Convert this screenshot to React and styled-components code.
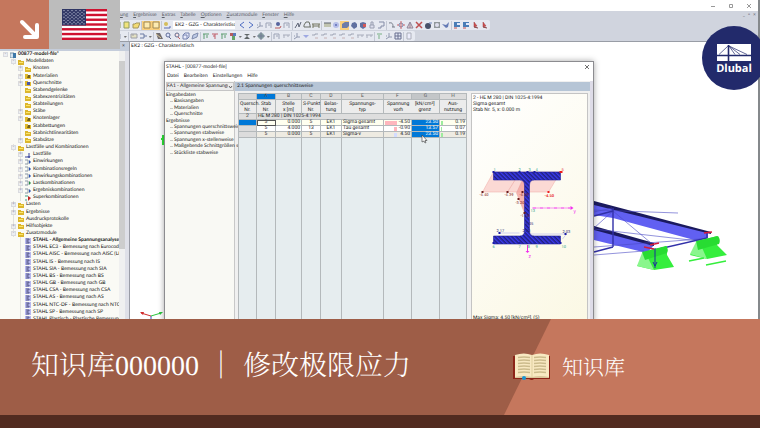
import React, { useState } from 'react';
import styled, { createGlobalStyle, css } from 'styled-components';

const menus = ['ung', 'Ergebnisse', 'Extras', 'Tabelle', 'Optionen', 'Zusatzmodule', 'Fenster', 'Hilfe'];

// glyph names per toolbar group, see GLYPHS
const viewTools = [
  ['back', 'next', 'axis', 'frame', 'node', 'frame'],
  ['truss', 'car', 'bench'],
  ['paper', 'globe', 'cube*', 'solid', 'redcube', 'lock', 'magnet'],
  ['curve', 'target', 'cone', 'cross', 'sphere', 'disc', 'bird'],
  ['blue', 'blue', 'flag', 'flag'],
];

const editTools = [
  ['ruler', 'load', 'caret'],
  ['grab', 'zoom', 'zoomr', 'box', 'solidg'],
  ['member', 'memberr', 'member', 'color', 'caret', 'dark', 'caret', 'target2', 'caret'],
  ['frame', 'bench2'],
  ['axis', 'support', 'step', 'step', 'step', 'step', 'step', 'bench2', 'bench2'],
  ['green', 'axis', 'grid'],
  ['page'],
];

const modelTree = [
  { depth: 0, text: '00877-model-file*', icon: 'root', open: '-', bold: true },
  { depth: 1, text: 'Modelldaten', icon: 'folder', open: '-' },
  { depth: 2, text: 'Knoten', icon: 'folder', open: '+' },
  { depth: 2, text: 'Materialien', icon: 'mat', open: '+' },
  { depth: 2, text: 'Querschnitte', icon: 'cs', open: '+' },
  { depth: 2, text: 'Stabendgelenke', icon: 'folder' },
  { depth: 2, text: 'Stabexzentrizitäten', icon: 'folder' },
  { depth: 2, text: 'Stabteilungen', icon: 'folder' },
  { depth: 2, text: 'Stäbe', icon: 'folder', open: '+' },
  { depth: 2, text: 'Knotenlager', icon: 'mat', open: '+' },
  { depth: 2, text: 'Stabbettungen', icon: 'mat' },
  { depth: 2, text: 'Stabnichtlinearitäten', icon: 'folder' },
  { depth: 2, text: 'Stabsätze', icon: 'folder', open: '+' },
  { depth: 1, text: 'Lastfälle und Kombinationen', icon: 'folder', open: '-' },
  { depth: 2, text: 'Lastfälle', icon: 'case', open: '+' },
  { depth: 2, text: 'Einwirkungen', icon: 'combo', open: '+' },
  { depth: 2, text: 'Kombinationsregeln', icon: 'combo', open: '+' },
  { depth: 2, text: 'Einwirkungskombinationen', icon: 'combo', open: '+' },
  { depth: 2, text: 'Lastkombinationen', icon: 'combog', open: '+' },
  { depth: 2, text: 'Ergebniskombinationen', icon: 'combo', open: '+' },
  { depth: 2, text: 'Superkombinationen', icon: 'combor' },
  { depth: 1, text: 'Lasten', icon: 'folder', open: '+' },
  { depth: 1, text: 'Ergebnisse', icon: 'folder', open: '+' },
  { depth: 1, text: 'Ausdruckprotokolle', icon: 'folder' },
  { depth: 1, text: 'Hilfsobjekte', icon: 'folder', open: '+' },
  { depth: 1, text: 'Zusatzmodule', icon: 'folder', open: '-' },
  { depth: 2, text: 'STAHL - Allgemeine Spannungsanalyse', icon: 'module', bold: true },
  { depth: 2, text: 'STAHL EC3 - Bemessung nach Eurocode', icon: 'module' },
  { depth: 2, text: 'STAHL AISC - Bemessung nach AISC (LRF', icon: 'module' },
  { depth: 2, text: 'STAHL IS - Bemessung nach IS', icon: 'module' },
  { depth: 2, text: 'STAHL SIA - Bemessung nach SIA', icon: 'module' },
  { depth: 2, text: 'STAHL BS - Bemessung nach BS', icon: 'module' },
  { depth: 2, text: 'STAHL GB - Bemessung nach GB', icon: 'module' },
  { depth: 2, text: 'STAHL CSA - Bemessung nach CSA', icon: 'module' },
  { depth: 2, text: 'STAHL AS - Bemessung nach AS', icon: 'module' },
  { depth: 2, text: 'STAHL NTC-DF - Bemessung nach NTC-D', icon: 'module' },
  { depth: 2, text: 'STAHL SP - Bemessung nach SP', icon: 'module' },
  { depth: 2, text: 'STAHL Plastisch - Plastische Bemessung', icon: 'module' },
];

const dialogTree = [
  { text: 'Eingabedaten' },
  { text: 'Basisangaben', child: true },
  { text: 'Materialien', child: true },
  { text: 'Querschnitte', child: true },
  { text: 'Ergebnisse' },
  { text: 'Spannungen querschnittsweise', child: true },
  { text: 'Spannungen stabweise', child: true },
  { text: 'Spannungen x-stellenweise', child: true },
  { text: 'Maßgebende Schnittgrößen sta', child: true },
  { text: 'Stückliste stabweise', child: true },
];

const columnWidths = [18, 19, 26, 19, 21, 42, 28, 28, 27];

const results = [
  { stab: 5, x: '0.000', punkt: 5, ek: 'EK1', typ: 'Sigma gesamt', vorh: '-4.50', grenz: '23.50', aus: '0.19', bar: 12, tone: '#ffb6bd' },
  { stab: 5, x: '4.000', punkt: 13, ek: 'EK1', typ: 'Tau gesamt', vorh: '-0.90', grenz: '13.57', aus: '0.07', bar: 3, tone: '#ffb6bd' },
  { stab: 5, x: '0.000', punkt: 5, ek: 'EK1', typ: 'Sigma-v', vorh: '4.50', grenz: '23.50', aus: '0.19', bar: 3, tone: '#d3dcff' },
];

const GLYPHS = {
  back: <path d="M6 1 2 4l4 3" fill="none" stroke="#2b50b8" />,
  next: <path d="M2 1l4 3-4 3" fill="none" stroke="#2b50b8" />,
  caret: <path d="M3 4h3L4 6z" fill="#555" />,
  axis: <path d="M4 1v4h3M4 5 1 7M1 4h1" fill="none" stroke="#7d86a0" />,
  frame: <path d="M1 7V2h5M6 2v5M3 4h2" fill="none" stroke="#8b93a8" />,
  node: <><circle cx="4" cy="3" r="2" fill="#33448a" /><path d="M1 7h5l1-2" fill="none" stroke="#b03b3b" /></>,
  truss: <path d="M1 7 4 2l1 4 2-5" fill="none" stroke="#3d4458" />,
  car: <path d="M1 6V4l2-3h3l1 3v2M1 6h7" fill="none" stroke="#4d5346" />,
  bench: <path d="M0 3h8M1 3v4M7 3v4M1 5h6" fill="none" stroke="#585a3e" />,
  bench2: <path d="M1 3h7M2 3v3M6 3v2" fill="none" stroke="#9a9fb0" />,
  paper: <><path d="M1 2h7v4H1z" fill="#b8bba0" /><path d="M1 2h7" stroke="#3f4452" /></>,
  globe: <><circle cx="4" cy="4" r="3" fill="#aab4e6" /><circle cx="4" cy="4" r="1" fill="#3d4fa8" /></>,
  cube: <path d="M1 3l3-2h4v4L6 7H1z" fill="#4b68b4" />,
  solid: <path d="M2 2l3-1 2 2v3L4 8 1 5z" fill="#3f538c" />,
  redcube: <><path d="M1 2l3-1 3 1v4L4 8 1 6z" fill="#41538e" /><path d="M4 3h3v3H4z" fill="#cf3535" /></>,
  lock: <path d="M2 7V4h4v3zM3 4V1h2v3" fill="#dde" stroke="#888fa3" />,
  magnet: <path d="M2 1h5v4H4v2H1" fill="none" stroke="#6d7796" />,
  curve: <path d="M1 2c4-1 4 2 4 4M4 6h3" fill="none" stroke="#59616e" />,
  target: <><circle cx="4" cy="4" r="2" fill="none" stroke="#5e6f9e" /><path d="M4 0v8M0 4h2M6 4h2" stroke="#c64b4b" /></>,
  target2: <><circle cx="4" cy="4" r="3" fill="#6d8c8c" /><path d="M4 0v8M0 4h8" stroke="#56607e" /></>,
  cone: <path d="M1 7l3-6 3 6zM4 2v5" fill="#e8c9c9" stroke="#7b6f86" />,
  cross: <path d="M1 1l6 6M7 1 1 7" stroke="#b52a2a" strokeWidth="1.5" />,
  sphere: <><circle cx="4" cy="5" r="3" fill="#222c48" /><path d="M5 2h3" stroke="#5673b4" /></>,
  disc: <><path d="M1 1h6v6H1z" fill="#7d8488" /><circle cx="4" cy="4" r="2" fill="#dde" /></>,
  bird: <path d="M0 3l4 1 3-3-1 5-2 1z" fill="#4560a8" />,
  blue: <><path d="M1 1h6v5H1z" fill="#2463a9" /><path d="M4 2h3v2H4z" fill="#dfe9ff" /><path d="M1 7h3" stroke="#bf2a2a" /></>,
  flag: <><path d="M3 1v5l3-1z" fill="#c92525" stroke="#8c1616" strokeWidth=".5" /><path d="M3 6l4 1" stroke="#6c1616" /></>,
  ruler: <path d="M1 2h6v4H1zM3 2v2" fill="#e4e0b8" stroke="#8b8c95" />,
  load: <path d="M1 2h4v4H1M5 4h3" fill="none" stroke="#4d6190" />,
  grab: <><path d="M1 1h4l3 6H3z" fill="#544e4e" /><path d="M1 2l5 4" stroke="#d9c18a" /></>,
  zoom: <><circle cx="4" cy="3" r="2" fill="#dce4ff" stroke="#3e4d80" /><path d="M5 5l2 2" stroke="#3e4d80" /></>,
  zoomr: <><circle cx="4" cy="3" r="2" fill="#ffe3e3" stroke="#444f77" /><path d="M5 5l2 2" stroke="#bf3d3d" /></>,
  box: <path d="M1 3l2-2h4v4L5 7H1zM1 3h4v4" fill="#e9ecff" stroke="#5b6aa0" />,
  solidg: <path d="M1 7l1-4 5-2-1 4z" fill="#b5c3e3" stroke="#66759d" />,
  member: <path d="M1 2h6M2 2v5M5 3v3" fill="none" stroke="#3a8a50" />,
  memberr: <path d="M1 2h6M4 2v5M2 4h2" fill="none" stroke="#b73c4b" />,
  color: <><path d="M1 1h3v3H1z" fill="#a83b3b" /><path d="M4 1h3v3H4z" fill="#3660ae" /><path d="M3 4h3v4H3z" fill="#469445" /></>,
  dark: <path d="M1 2h6L4 4l3 3H1l3-3z" fill="#3e4545" />,
  support: <path d="M1 3h6L4 6z" fill="#8d9ae0" />,
  step: <><path d="M1 3h3V2h3" fill="none" stroke="#9096a8" /><path d="M4 6h3" stroke="#c2a6a6" /></>,
  green: <path d="M3 7V3M1 2h5" stroke="#5fa56a" />,
  grid: <path d="M1 1h6v6H1zM4 1v6M1 4h6" fill="#e4e8f8" stroke="#4b5378" />,
  page: <path d="M2 1h4v6H2z" fill="#eef" stroke="#9ea3ae" />,
  new: <path d="M1 1h5v6H1z" fill="#f3e45f" stroke="#7e8a44" />,
  open: <path d="M1 3h2l1-1h4L6 7H1z" fill="#f7d957" stroke="#92813b" />,
  save: <path d="M1 1h6v6H1z" fill="#fff3bd" stroke="#8b7a4c" />,
  user: <><circle cx="3" cy="3" r="2" fill="#d1b437" /><path d="M1 7h6V5" fill="none" stroke="#3a4fa1" /></>,
};

const TREE_ICONS = {
  root: <><path d="M0 1h4v5H0z" fill="#d4e3ee" stroke="#7893a8" /><path d="M3 1h3v5H3z" fill="#3e78a8" /></>,
  folder: <><path d="M0 1h3v1h3v4H0z" fill="#dcb62c" /><path d="M1 3h4v1H1z" fill="#fae56c" /></>,
  mat: <><path d="M0 1h3v1h3v4H0z" fill="#e0b92c" /><path d="M3 2h2v3H2z" fill="#73611e" /></>,
  cs: <><path d="M0 1h3v1h3v4H0z" fill="#e0b92c" /><path d="M2 2h3v3H2z" fill="#4a55a8" /></>,
  case: <path d="M0 5h3M4 1v4M3 4l1 2 1-2" fill="none" stroke="#34419c" />,
  combo: <><path d="M0 1h3v4H0" fill="none" stroke="#8b98a6" /><path d="M4 1l2 2-2 2z" fill="#2a52b4" /></>,
  combog: <><path d="M0 1h3v4H0" fill="none" stroke="#8b98a6" /><path d="M4 1l2 2-2 2z" fill="#258b44" /></>,
  combor: <><path d="M0 1h3M0 5h2" fill="none" stroke="#3c9b86" /><path d="M3 1l3 2-3 3z" fill="#bf2525" /></>,
  module: <><path d="M0 0h6v6H0z" fill="#b6b7ef" /><path d="M1 1h3v1H2v2h2v1H1" fill="none" stroke="#5c5f8c" /></>,
};

const Flag = () => (
  <svg width="45" height="31" viewBox="0 0 45 31" role="img" aria-label="USA">
    <rect width="45" height="31" fill="#fff" />
    {[...Array(7)].map((_, i) => (
      <rect key={i} y={i * 4.77} width="45" height="2.4" fill="#cf1230" />
    ))}
    <rect width="24" height="16.5" fill="#303765" />
    {[...Array(9)].map((_, row) =>
      [...Array(row % 2 ? 5 : 6)].map((__, col) => (
        <circle
          key={`${row}-${col}`}
          cx={2 + col * 4 + (row % 2 ? 2 : 0)}
          cy={1.6 + row * 1.65}
          r=".6"
          fill="#d5d8ea"
        />
      ))
    )}
  </svg>
);

const Arrow = () => (
  <svg width="22" height="22" viewBox="0 0 22 22" aria-hidden="true">
    <path d="M3 3l14 14M18 6v12H6" fill="none" stroke="#fff" strokeWidth="4" strokeLinecap="round" strokeLinejoin="round" />
  </svg>
);

const Bridge = () => (
  <svg width="34" height="17" viewBox="0 0 34 17" aria-hidden="true">
    <rect width="34" height="17" fill="#fff" />
    <path d="M0 11.5h34" stroke="#222a6b" strokeWidth="1.6" />
    <path d="M11.5 1v16" stroke="#222a6b" strokeWidth="1.6" />
    <path d="M11 2 2 10.5M12 2l6 8.5M12 2l11 8.5M12 2l18 8.5" stroke="#222a6b" strokeWidth=".7" />
  </svg>
);

const Book = () => (
  <svg width="38" height="28" viewBox="0 0 38 28" aria-hidden="true">
    <path d="M0 3h37v23H21q-2 2-5 0H0z" fill="#8c2418" />
    <path d="M2 2q9-3 17 0 8-3 17 0v22H2z" fill="#f8e9c2" />
    <path d="M2 24q9-2 17 0 8-2 17 0v1H2z" fill="#d9c59a" />
    <path d="M19 2v22" stroke="#dfcf9f" />
    {[4, 7, 10, 13, 16, 19].map((y) => (
      <path key={y} d={`M5 ${y + 0.5}q6-1 12 0M21 ${y + 0.5}q6-1 12 0`} fill="none" stroke="#cbbb8c" strokeWidth="1.3" />
    ))}
    <circle cx="11" cy="25" r="2" fill="#1796d4" />
  </svg>
);

// end of the steel frame with its two supports
const Scene = () => (
  <SceneSvg viewBox="130 42 628 277" preserveAspectRatio="xMaxYMin slice" aria-hidden="true">
    <path d="M594 202 708 232v6l-10 3-85-23-19-3z" fill="#6160f2" />
    <path d="M594 201 711 232v2L594 205z" fill="#1b1a5e" />
    <path d="M594 228l60 17-6 7-5 0-49-12z" fill="#6160f2" />
    <path d="M594 226l60 17v3L594 230z" fill="#1b1a5e" />
    <path d="M594 210l84 3M594 212l18-4M594 228l19-17 38 32M594 229l105 12M594 247l106-8M594 255l50-4" fill="none" stroke="#4a49c4" strokeWidth=".6" />
    <path d="M594 216l19-5M613 208v39M594 252l19-5M650 251l57-13v-6" fill="none" stroke="#3130a8" strokeWidth="1.4" />
    <path d="M647 252l20-6v9l7 12-20 3-17-4z" fill="#35ee3d" />
    <path d="M642 253l-5 13 17 4-8-16z" fill="#8af68d" />
    <path d="M642 252l24-6q3 3 1 7l-22 7z" fill="#28dc32" />
    <path d="M699 241l18-5v9l10 10-20 4-17-4z" fill="#35ee3d" />
    <path d="M696 242l-6 12 17 5-7-16z" fill="#8af68d" />
    <path d="M696 241l22-5q3 4 1 8l-21 6z" fill="#28dc32" />
    <path d="M689 261l15-3M706 265l20-4" stroke="#35ee3d" strokeWidth="1.5" />
    <path d="M650 245l9-2M644 247l10 2M704 233l8-1" stroke="#d51a3b" strokeWidth="1.5" />
    <path d="M655 248v20M653 262l2 4 2-4" fill="none" stroke="#1d2f9c" />
    <path d="M161 139h4M163 135v10" stroke="#2ee436" strokeWidth="2" />
    <path d="M151 316v4" stroke="#384cc0" />
    <path d="M151 316l-10-3" stroke="#d12c2c" />
    <path d="M140 312l4 0-1 3zM138 312l-1 2" fill="#d12c2c" />
    <path d="M151 316l10-3" stroke="#2bc53e" />
    <path d="M163 312l-4 0 1 3z" fill="#2bc53e" />
  </SceneSvg>
);

// HE M 280 with the stress diagram on the upper flange
const Section = () => (
  <SectionSvg viewBox="472 113 115 202" preserveAspectRatio="xMidYMin slice" aria-hidden="true">
    <defs>
      <pattern id="hatch" width="3" height="3" patternUnits="userSpaceOnUse" patternTransform="rotate(45)">
        <rect width="3" height="3" fill="#3a39ee" />
        <rect width="3" height="1.5" fill="#20207c" />
      </pattern>
    </defs>
    <path d="M493 172l-11 20h66l12-20z" fill="#fbd9d4" stroke="#eeaaa5" strokeWidth=".5" />
    <path d="M519 173l-12 19M525 173l-9 20 8 20z" fill="#f5a5a0" stroke="#e28f8c" strokeWidth=".5" opacity=".8" />
    <path d="M493 172h67v8h-26q-5 0-5 5v46q0 5 5 5h26v8h-67v-8h26q5 0 5-5v-46q0-5-5-5h-26z" fill="url(#hatch)" stroke="#1f1e9c" strokeWidth=".6" />
    <path d="M498 233h21M530 234h36l-4 5" fill="none" stroke="#a5a5ee" strokeWidth=".5" />
    <path d="M532 208h38" stroke="#f22bee" strokeDasharray="4 1 1 1" />
    <path d="M527 245v6" stroke="#f22bee" />
    <path d="M570 206l3 2-3 2zM525 251h4l-2 2z" fill="#f22bee" />
    {[[482, 192], [507, 192], [522, 192], [518, 199], [524, 213]].map(([x, y]) => (
      <rect key={`${x}${y}`} x={x - 1} y={y - 1} width="2" height="2" fill="#6c1b1b" />
    ))}
    {[[493, 172], [519, 172], [527, 172], [534, 172], [493, 243], [519, 243], [534, 243], [560, 243], [499, 233], [565, 234]].map(([x, y]) => (
      <rect key={`${x}${y}`} x={x - 1} y={y - 1} width="2" height="2" fill="#1d1da6" />
    ))}
    <path d="M559 171h3v2h-3zM547 191h2v2h-2z" fill="#ee1d1d" />
    <g fontSize="4" fill="#2c9c86">
      <text x="493" y="171">1</text>
      <text x="518" y="171">2</text>
      <text x="528" y="171">3</text>
      <text x="535" y="171">4</text>
      <text x="561" y="171" fill="#e02525">5</text>
      <text x="530" y="212">13</text>
      <text x="492" y="248">6</text>
      <text x="518" y="248">7</text>
      <text x="527" y="248">8</text>
      <text x="535" y="248">9</text>
      <text x="561" y="248">10</text>
    </g>
    <g fontSize="4" fill="#7c2020">
      <text x="479" y="196">-4.40</text>
      <text x="504" y="196">-4.39</text>
      <text x="519" y="196">-4.39</text>
      <text x="515" y="204">-3.20</text>
      <text x="520" y="217">-1.10</text>
      <text x="544" y="197" fill="#e81c1c" fontWeight="bold">-4.50</text>
    </g>
    <g fontSize="4" fill="#26266f">
      <text x="496" y="232">2.17</text>
      <text x="522" y="232">2.20</text>
      <text x="525" y="225">1.05</text>
      <text x="562" y="233">2.03</text>
    </g>
    <g fontSize="5" fill="#f22bee">
      <text x="573" y="213">y</text>
      <text x="528" y="258">z</text>
    </g>
  </SectionSvg>
);

const ToolGroup = ({ tools }) => (
  <Group>
    {tools.map((tool, index) => {
      const name = tool.replace('*', '');
      return (
        <Tool key={index} type="button" aria-label={name} $active={tool !== name} $narrow={name === 'caret'}>
          <svg width="8" height="8" viewBox="0 0 8 8">{GLYPHS[name]}</svg>
        </Tool>
      );
    })}
  </Group>
);

const ResultTable = () => (
  <Table>
    <colgroup>
      {columnWidths.map((width, index) => (
        <col key={index} style={{ width }} />
      ))}
    </colgroup>
    <thead>
      <LetterRow>
        <th />
        {'ABCDEFGH'.split('').map((letter) => (
          <Letter key={letter} $current={letter === 'A'} $marked={letter === 'G'}>{letter}</Letter>
        ))}
      </LetterRow>
      <TitleRow>
        <th>Quersch.<br />Nr.</th>
        <th>Stab<br />Nr.</th>
        <th>Stelle<br />x [m]</th>
        <th>S-Punkt<br />Nr.</th>
        <th>Belas-<br />tung</th>
        <th>Spannungs-<br />typ</th>
        <th colSpan="2">
          <Pair><span>Spannung</span><span>[kN/cm²]</span><span>vorh</span><span>grenz</span></Pair>
        </th>
        <th>Aus-<br />nutzung</th>
      </TitleRow>
    </thead>
    <tbody>
      <GroupRow>
        <td>2</td>
        <td colSpan="8">HE M 280 | DIN 1025-4:1994</td>
      </GroupRow>
      {results.map((row, index) => (
        <ResultRow key={index} $tone={['#fffff0', '#ffffff', '#eeebe2'][index]}>
          <Cell $head $selected={index === 0} />
          <Cell $center $focused={index === 0}>{row.stab}</Cell>
          <Cell>{row.x}</Cell>
          <Cell $center>{row.punkt}</Cell>
          <Cell $center>{row.ek}</Cell>
          <Cell $left>{row.typ}</Cell>
          <Cell>
            <Value>
              <BarTrack><Bar style={{ width: row.bar, background: row.tone }} /></BarTrack>
              {row.vorh}
            </Value>
          </Cell>
          <Cell $selected>{row.grenz}</Cell>
          <Cell>
            <Value>
              <Bar style={{ width: Math.max(1, Math.round(row.aus * 10)), background: '#9dec9d' }} />
              {row.aus}
            </Value>
          </Cell>
        </ResultRow>
      ))}
      <FillRow>
        {columnWidths.map((_, index) => (
          <td key={index} />
        ))}
      </FillRow>
    </tbody>
  </Table>
);

export default function App() {
  const [loadCase, setLoadCase] = useState('EK2');
  const [designCase, setDesignCase] = useState('FA1');

  return (
    <Page>
      <GlobalStyle />
      <Stage>
        <Program>
          <TitleBar>
            <WindowButton type="button" aria-label="Minimieren"><svg width="6" height="6"><path d="M1 3.5h4" stroke="#999" /></svg></WindowButton>
            <WindowButton type="button" aria-label="Maximieren"><svg width="6" height="6"><path d="M1.5 1.5h3v3h-3z" fill="none" stroke="#999" /></svg></WindowButton>
            <WindowButton type="button" aria-label="Schließen"><svg width="6" height="6"><path d="M1 1l4 4M5 1 1 5" stroke="#999" /></svg></WindowButton>
          </TitleBar>
          <Ribbon>
            <MenuBar>
              {menus.map((menu) => (
                <MenuButton key={menu} type="button">{menu}</MenuButton>
              ))}
              <MdiButtons>
                <button type="button">_</button>
                <button type="button">▫</button>
                <button type="button">×</button>
              </MdiButtons>
            </MenuBar>
            <Toolbar>
              <ToolGroup tools={['new', 'new', 'open']} />
              <ToolGroup tools={['save*', 'save*']} />
              <ToolGroup tools={['user']} />
              <CaseSelect aria-label="Lastfall" value={loadCase} onChange={(e) => setLoadCase(e.target.value)}>
                <option value="EK2">EK2 - GZG - Charakteristisc</option>
              </CaseSelect>
              {viewTools.map((tools, index) => (
                <ToolGroup key={index} tools={tools} />
              ))}
            </Toolbar>
            <Toolbar>
              <ToolGroup tools={['frame', 'caret']} />
              {editTools.map((tools, index) => (
                <ToolGroup key={index} tools={tools} />
              ))}
            </Toolbar>
          </Ribbon>
          <Workspace>
            <Navigator>
              <NavHeader><button type="button" aria-label="Navigator schließen">×</button></NavHeader>
              <NavBody>
                <Tree>
                  {modelTree.map((item) => (
                    <TreeRow key={item.text} $depth={item.depth} $bold={item.bold}>
                      <Expander $shown={item.open}>{item.open}</Expander>
                      <TreeIcon viewBox="0 0 6 6">{TREE_ICONS[item.icon]}</TreeIcon>
                      <span>{item.text}</span>
                    </TreeRow>
                  ))}
                </Tree>
                <ScrollTrack><ScrollThumb /></ScrollTrack>
              </NavBody>
            </Navigator>
            <Viewport>
              <Caption>EK2 : GZG - Charakteristisch</Caption>
              <Scene />
            </Viewport>
          </Workspace>
        </Program>

        <Dialog role="dialog" aria-label="STAHL">
          <DialogTitle>
            <span>STAHL - [00877-model-file]</span>
            <WindowButton type="button" aria-label="Dialog schließen"><svg width="6" height="6"><path d="M1 1l4 4M5 1 1 5" stroke="#333" strokeWidth=".7" /></svg></WindowButton>
          </DialogTitle>
          <DialogMenu>
            {['Datei', 'Bearbeiten', 'Einstellungen', 'Hilfe'].map((menu) => (
              <button key={menu} type="button">{menu}</button>
            ))}
          </DialogMenu>
          <DialogBody>
            <DialogNav>
              <SelectBox>
                <select aria-label="Bemessungsfall" value={designCase} onChange={(e) => setDesignCase(e.target.value)}>
                  <option value="FA1">FA1 - Allgemeine Spannungsana</option>
                </select>
                <svg width="5" height="4"><path d="M1 1l1.5 2L4 1" fill="none" stroke="#444" strokeWidth=".8" /></svg>
              </SelectBox>
              <DialogTree>
                {dialogTree.map((item) => (
                  <DialogItem key={item.text} $child={item.child}>{item.text}</DialogItem>
                ))}
              </DialogTree>
            </DialogNav>
            <DialogMain>
              <MaskTitle>2.1 Spannungen querschnittsweise</MaskTitle>
              <Panels>
                <ResultTable />
                <Preview>
                  <p>2 - HE M 280 | DIN 1025-4:1994</p>
                  <p>Sigma gesamt</p>
                  <p>Stab Nr. 5, x: 0.000 m</p>
                  <Section />
                  <p>Max Sigma: 4.50 [kN/cm²], (5)</p>
                </Preview>
              </Panels>
            </DialogMain>
          </DialogBody>
          <Cursor viewBox="0 0 7 9" aria-hidden="true">
            <path d="M1 0v7l2-1 1 2 1-.5-1-2h2z" fill="#fff" stroke="#333" strokeWidth=".6" />
          </Cursor>
        </Dialog>

        <Badges>
          <ArrowBadge><Arrow /></ArrowBadge>
          <FlagBadge><Flag /></FlagBadge>
        </Badges>
        <Logo>
          <Bridge />
          <span>Dlubal</span>
        </Logo>
      </Stage>

      <Banner>
        <Headline>
          <span>知识库000000</span>
          <span>｜</span>
          <span>修改极限应力</span>
        </Headline>
        <Category>
          <Book />
          <span>知识库</span>
        </Category>
      </Banner>
      <Strip />
    </Page>
  );
}

const GlobalStyle = createGlobalStyle`
  * {
    box-sizing: border-box;
  }

  body {
    margin: 0;
    font-family: Lato, 'Open Sans', sans-serif;
    text-rendering: geometricPrecision;
  }

  button, select {
    margin: 0;
    padding: 0;
    border: 0;
    background: none;
    color: inherit;
    font: inherit;
    text-rendering: inherit;
  }

  p, h1, ul {
    margin: 0;
    padding: 0;
    list-style: none;
  }

  svg {
    display: block;
    flex: none;
  }
`;

const Page = styled.div`
  display: flex;
  flex-direction: column;
  height: 100vh;
  overflow: hidden;
`;

const Stage = styled.main`
  position: relative;
  flex: 1;
  min-height: 0;
  overflow: hidden;
  font-size: 5px;
  line-height: 7px;
  color: #222;
`;

const Program = styled.div`
  display: flex;
  flex-direction: column;
  height: 100%;
  border-right: 2px solid #85898c;
  background: #fff;
`;

const TitleBar = styled.header`
  display: flex;
  justify-content: flex-end;
  align-items: center;
  gap: 12px;
  height: 11px;
  padding-right: 6px;
`;

const WindowButton = styled.button`
  display: flex;
`;

const Ribbon = styled.div`
  height: 31px;
  border-bottom: 1px solid #999da6;
  background: #d0d4de;
`;

const MenuBar = styled.nav`
  display: flex;
  align-items: center;
  gap: 5px;
  height: 9px;
  padding-left: 120px;
  color: #5c6068;
`;

const MenuButton = styled.button`
  &::first-letter {
    text-decoration: underline;
  }
`;

const MdiButtons = styled.div`
  display: flex;
  gap: 3px;
  margin-left: auto;
  padding-right: 2px;
`;

const Toolbar = styled.div`
  display: flex;
  align-items: center;
  gap: 2px;
  width: max-content;
  height: 10px;
  padding: 0 2px 0 113px;
  border-radius: 0 2px 2px 0;
  background: #e6e9f1;

  & + & {
    margin-top: 1px;
  }
`;

const Group = styled.div`
  display: flex;

  & + & {
    border-left: 1px solid #c3c8d4;
    margin-left: -1px;
  }
`;

const Tool = styled.button`
  display: flex;
  justify-content: center;
  align-items: center;
  width: ${({ $narrow }) => ($narrow ? 5 : 9)}px;
  height: 9px;
  background: ${({ $active }) => ($active ? '#f9cf7c' : 'none')};

  svg {
    opacity: 0.8;
  }
`;

const CaseSelect = styled.select`
  appearance: none;
  width: 62px;
  height: 8px;
  padding-left: 2px;
  background: #fff;
  line-height: 8px;
`;

const Workspace = styled.div`
  display: flex;
  flex: 1;
  min-height: 0;
`;

const Navigator = styled.aside`
  display: flex;
  flex: none;
  flex-direction: column;
  width: 130px;
  border-right: 1px solid #9a9ca6;
  background: #dfe0e8;
`;

const NavHeader = styled.div`
  display: flex;
  justify-content: flex-end;
  height: 9px;
  padding-right: 4px;
  background: #c5cddb;
  line-height: 7px;
`;

const NavBody = styled.div`
  display: flex;
  flex: 1;
  min-height: 0;
  margin-right: 4px;
  overflow: hidden;
  background: #fafaf5;
`;

const Tree = styled.ul`
  display: grid;
  flex: 1;
  grid-auto-rows: minmax(0, 1fr);
  min-width: 0;
  margin-bottom: -4px;
  overflow: hidden;
`;

const guides = ['none', 'linear-gradient(#e2e2de, #e2e2de) 13px 0 / 1px 100% no-repeat', 'linear-gradient(#e2e2de, #e2e2de) 20px 0 / 1px 100% no-repeat'];

const TreeRow = styled.li`
  display: flex;
  align-items: center;
  gap: 2px;
  padding-left: ${({ $depth }) => [3, 11, 18][$depth]}px;
  background: ${({ $depth }) => guides[$depth]};
  font-weight: ${({ $bold }) => ($bold ? 700 : 400)};
  white-space: nowrap;
  color: #111;
`;

const Expander = styled.span`
  display: flex;
  flex: none;
  justify-content: center;
  align-items: center;
  width: 5px;
  height: 5px;
  line-height: 5px;
  font-weight: 400;
  color: #889;

  ${({ $shown }) =>
    $shown &&
    css`
      border: 1px solid #dadbdf;
      background: #eceef2;
    `}
`;

const TreeIcon = styled.svg`
  width: 6px;
  height: 6px;
`;

const ScrollTrack = styled.div`
  flex: none;
  width: 6px;
  padding-top: 10px;
  background: #f0f0f0;
`;

const ScrollThumb = styled.div`
  height: 73%;
  background: #cdcdcd;
`;

const Viewport = styled.section`
  display: flex;
  flex: 1;
  flex-direction: column;
  min-width: 0;
  overflow: hidden;
`;

const Caption = styled.div`
  height: 8px;
  margin-bottom: -8px;
  padding: 1px 1px 0;
`;

const SceneSvg = styled.svg`
  flex: 1;
  width: 100%;
  min-height: 0;
`;

const Dialog = styled.section`
  position: absolute;
  top: 61px;
  left: 164px;
  display: flex;
  flex-direction: column;
  width: 430px;
  height: calc(100% - 57px);
  border: 1px solid #8c8c90;
  background: #fff;
  box-shadow: 0 0 6px rgba(0, 0, 0, 0.35);
`;

const DialogTitle = styled.div`
  display: flex;
  justify-content: space-between;
  align-items: center;
  height: 10px;
  padding: 0 3px 0 1px;
`;

const DialogMenu = styled.nav`
  display: flex;
  align-items: center;
  gap: 5px;
  height: 9px;
  padding-left: 2px;
`;

const DialogBody = styled.div`
  display: flex;
  flex: 1;
  min-height: 0;
  border-right: 3px solid #dedce8;
  background: #f0f0f0;
`;

const DialogNav = styled.div`
  flex: none;
  width: 70px;
  padding: 1px 0 0 1px;
  border-right: 1px solid #c8c8c8;
  background: #f9f9f4;
`;

const SelectBox = styled.div`
  display: flex;
  align-items: center;
  height: 9px;
  border: 1px solid #c5c5c5;
  background: #ececec;

  select {
    flex: 1;
    min-width: 0;
    height: 7px;
    appearance: none;
  }
`;

const DialogTree = styled.ul`
  display: grid;
  grid-auto-rows: 1fr;
  height: 64px;
  margin-top: 1px;
`;

const DialogItem = styled.li`
  height: 6px;
  padding-left: ${({ $child }) => ($child ? 8 : 0)}px;
  white-space: nowrap;
  line-height: 6px;
  background: ${({ $child }) => ($child ? 'linear-gradient(#c8c8c4, #c8c8c4) 4px 3px / 3px 1px no-repeat' : 'none')};
`;

const DialogMain = styled.div`
  display: flex;
  flex: 1;
  flex-direction: column;
  min-width: 0;
`;

const MaskTitle = styled.h1`
  height: 9px;
  margin-top: 1px;
  padding-left: 2px;
  background: #b6c5d6;
  font-size: 5px;
  font-weight: 400;
  line-height: 8px;
`;

const Panels = styled.div`
  display: flex;
  flex: 1;
  gap: 4px;
  min-height: 0;
  padding: 2px 2px 0 3px;
`;

const Table = styled.table`
  flex: none;
  width: 228px;
  height: 100%;
  border-collapse: collapse;
  table-layout: fixed;
  background: #e6edef;
  font-family: Roboto, 'Liberation Sans', sans-serif;
  line-height: 5px;

  th, td {
    padding: 0 1px;
    border: 1px solid #b4b9bb;
    font-weight: 400;
    white-space: nowrap;
  }
`;

const LetterRow = styled.tr`
  height: 6px;
  background: #d8d8d8;
`;

const Letter = styled.th`
  background: ${({ $current, $marked }) => ($current ? '#0078d7' : $marked ? '#c3c6c8' : '#dcdcdc')};
  color: #555;
`;

const TitleRow = styled.tr`
  height: 14px;
  background: #ececec;
  line-height: 6px;
`;

const Pair = styled.div`
  display: grid;
  grid-template-columns: 1fr 1fr;
`;

const GroupRow = styled.tr`
  height: 6px;
  background: #dedede;

  td:first-child {
    text-align: center;
  }
`;

const ResultRow = styled.tr`
  height: 6px;
  background: ${({ $tone }) => $tone};
`;

const Cell = styled.td`
  text-align: ${({ $center, $left }) => ($center ? 'center' : $left ? 'left' : 'right')};

  ${({ $head }) =>
    $head &&
    css`
      background: #dcdcdc;
    `}

  ${({ $selected }) =>
    $selected &&
    css`
      background: #0078d7;
      color: #fff;
    `}

  ${({ $focused }) =>
    $focused &&
    css`
      outline: 1px solid #555;
      outline-offset: -1px;
    `}
`;

const Value = styled.div`
  display: flex;
  justify-content: space-between;
  align-items: center;
`;

const BarTrack = styled.div`
  display: flex;
  justify-content: flex-end;
  width: 12px;
`;

const Bar = styled.div`
  height: 4px;
`;

const FillRow = styled.tr`
  td {
    border-top: 0;
  }
`;

const Preview = styled.div`
  display: flex;
  flex: 1;
  flex-direction: column;
  min-width: 0;
  padding: 1px 0 0 1px;
  border: 1px solid #c4c4c4;
  background: linear-gradient(135deg, #fff, #fbf8e4);
  font-family: Roboto, 'Liberation Sans', sans-serif;
  line-height: 6px;
`;

const SectionSvg = styled.svg`
  flex: 1;
  width: 100%;
  min-height: 0;
`;

const Cursor = styled.svg`
  position: absolute;
  top: 73px;
  left: 256px;
  width: 7px;
  height: 9px;
`;

const Badges = styled.div`
  position: absolute;
  top: 0;
  left: 0;
  display: flex;
  height: 49px;
`;

const ArrowBadge = styled.div`
  display: flex;
  justify-content: flex-end;
  align-items: flex-end;
  width: 49px;
  padding: 8px;
  background: #c5775d;
`;

const FlagBadge = styled.div`
  display: flex;
  justify-content: center;
  align-items: center;
  width: 71px;
  background: #bcbcbc;
`;

const Logo = styled.div`
  position: absolute;
  top: 26px;
  right: -6px;
  display: flex;
  flex-direction: column;
  justify-content: center;
  align-items: center;
  width: 64px;
  height: 64px;
  padding-top: 4px;
  border-radius: 50%;
  background: #222a6b;
  color: #fff;
  font-family: 'Open Sans', 'Noto Sans', sans-serif;
  font-size: 11px;
  font-weight: 700;
  line-height: 15px;
`;

const Banner = styled.footer`
  display: grid;
  flex: none;
  grid-template-columns: 63fr 32fr;
  align-items: center;
  height: 96px;
  background: #9e5d47;
  color: #fff;
  font-family: 'Liberation Serif', 'Noto Serif CJK SC', 'Noto Sans CJK SC', serif;
  font-weight: 300;
`;

const Headline = styled.h1`
  display: flex;
  gap: 8px;
  padding-left: 31px;
  font-size: 28px;
  font-weight: 300;
  line-height: 40px;
  white-space: nowrap;
`;

const Category = styled.div`
  position: relative;
  display: flex;
  align-items: center;
  gap: 11px;
  height: 100%;
  padding-left: 9px;
  font-size: 21px;

  &::before {
    content: '';
    position: absolute;
    inset: 0;
    background: #c5775d;
    clip-path: polygon(47px 0, 100% 0, 100% 100%, 0 100%);
  }

  > * {
    position: relative;
  }
`;

const Strip = styled.div`
  flex: none;
  height: 13px;
  background: #522b20;
`;
